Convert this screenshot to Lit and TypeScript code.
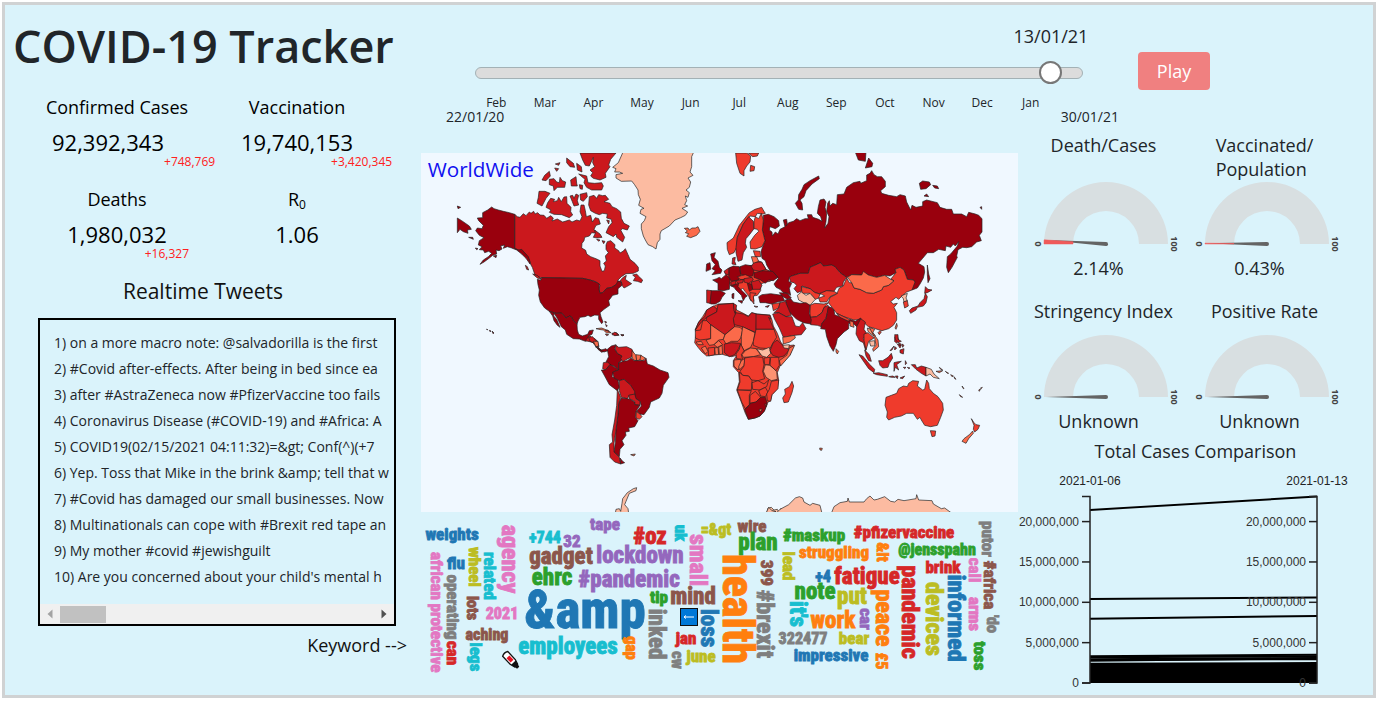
import { LitElement, html, svg, css } from "lit";
import { customElement, property, state } from "lit/decorators.js";
import { classMap } from "lit/directives/class-map.js";

/* ---------- data ---------- */

interface Stat { label: string; sub?: string; value: string; delta?: string; after?: boolean }

const STATS: Stat[] = [
  { label: "Confirmed Cases", value: "92,392,343", delta: "+748,769", after: true },
  { label: "Vaccination", value: "19,740,153", delta: "+3,420,345" },
  { label: "Deaths", value: "1,980,032", delta: "+16,327" },
  { label: "R", sub: "0", value: "1.06" },
];

const TWEETS = [
  "on a more macro note: @salvadorilla is the first",
  "#Covid after-effects. After being in bed since ea",
  "after #AstraZeneca now #PfizerVaccine too fails",
  "Coronavirus Disease (#COVID-19) and #Africa: A",
  "COVID19(02/15/2021 04:11:32)=&gt; Conf(^)(+7",
  "Yep. Toss that Mike in the brink &amp; tell that w",
  "#Covid has damaged our small businesses. Now",
  "Multinationals can cope with #Brexit red tape an",
  "My mother #covid #jewishguilt",
  "Are you concerned about your child's mental h",
];

const MONTHS = ["Feb", "Mar", "Apr", "May", "Jun", "Jul", "Aug", "Sep", "Oct", "Nov", "Dec", "Jan"];

const DARK = "#99000d", RED = "#cb181d", MID = "#ef3b2c", SOFT = "#fb6a4a", PALE = "#fc9272", NONE = "#fcbba1";

type Shape = [string, string];
interface Region { x: number; y: number; shapes: Shape[] }

/* Each region keeps its outlines relative to its own origin. */
const REGIONS: Region[] = [
  { x: -3, y: -9, shapes: [
    [RED, "284,193 292,200 300,202 310,191 318,197 328,186 333,190 341,184 345,192 353,188 360,195 372,196 380,205 392,197 400,204 396,213 412,207 428,216 448,210 456,216 470,210 480,213 486,200 480,185 483,165 492,165 496,182 499,200 512,196 517,216 526,203 536,206 541,222 528,226 522,238 530,250 515,248 508,258 494,262 492,272 486,280 485,294 497,301 500,312 512,320 530,327 540,332 540,348 546,364 553,362 556,348 551,340 559,333 556,318 565,308 558,298 558,285 562,275 572,272 585,284 584,294 596,302 600,309 610,303 616,296 624,314 630,328 645,340 655,352 655,363 640,370 618,371 604,380 592,392 599,394 608,383 619,376 616,388 624,394 635,401 622,409 612,414 606,406 604,394 590,404 575,412 560,415 548,428 540,430 537,418 540,405 527,395 510,390 488,385 362,383 345,375 337,352 333,345 325,325 312,306 305,305 284,295"],
    [RED, "357,124 375,124 390,130 378,145 366,168 351,160 355,142"],
    [RED, "392,145 404,148 400,155 412,152 416,142 424,155 432,141 440,140 441,160 453,172 452,185 458,195 448,203 425,194 402,193 388,187 393,180 378,172 383,158"],
    [RED, "450,138 458,136 462,145 468,132 476,136 472,152 476,165 462,168 457,155"],
    [RED, "480,133 500,128 502,140 490,154 482,150"],
    [RED, "508,140 522,136 530,145 536,134 548,137 556,136 566,148 552,155 570,160 576,170 590,176 602,186 604,205 612,220 628,228 622,240 608,236 602,240 614,262 608,276 590,262 588,252 580,260 558,248 566,230 576,218 574,208 560,204 562,192 548,190 538,194 526,190 512,182 506,165"],
    [RED, "524,240 540,252 546,262 532,264 520,262 526,250"],
    [RED, "480,9 588,9 572,28 566,45 570,50 556,70 558,82 540,90 520,85 512,78 518,68 510,60 524,50 518,38 520,22 508,48 496,46 488,30"],
    [RED, "476,72 500,78 504,98 524,100 545,98 550,108 545,120 515,120 500,112 492,98 495,88"],
    [RED, "388,88 402,86 410,96 418,98 420,82 427,92 437,96 434,112 412,112 402,122 400,108 388,104"],
    [RED, "366,90 374,76 388,64 391,78 378,92"],
    [RED, "440,24 460,40 464,52 450,50 440,38"],
    [RED, "470,40 484,50 486,66 472,60"],
    [RED, "452,90 468,80 470,100 472,108 454,108"],
    [RED, "404,54 416,56 410,64"], [RED, "406,42 420,38 416,46"], [RED, "478,104 488,106 487,118 480,116"],
    [RED, "638,375 650,372 655,378 668,390 664,398 652,394 640,392 646,382"],
    [RED, "316,346 322,350 326,360 320,358"], [RED, "338,372 352,376 364,388 352,384"],
    [RED, "560,210 568,212 566,222"], [RED, "546,272 555,274 551,281"], [RED, "530,268 540,270 536,274"],
    [DARK, "188,188 203,180 215,171 222,176 235,180 250,184 268,188 284,193 284,295 296,300 305,298 312,306 325,320 330,335 330,342 318,325 305,312 290,300 275,294 262,290 250,295 254,285 242,288 246,297 237,302 228,300 230,312 218,316 207,325 192,336 180,343 190,330 205,320 215,310 206,304 194,308 190,300 178,299 186,290 175,285 178,272 192,263 178,256 167,242 172,234 186,236 190,226 176,212 172,204 188,203"],
    [DARK, "112,204 125,212 148,228 154,238 142,240 144,250 130,245 120,238 112,248"],
    [DARK, "112,168 122,172 114,176"], [DARK, "146,262 158,262 160,268"], [DARK, "166,294 174,296 170,299"],
    [DARK, "220,318 230,316 228,323"], [DARK, "200,537 203,539 201,540"], [DARK, "208,541 213,543 210,545"], [DARK, "216,543 222,549 219,551"],
    [DARK, "352,388 362,391 365,383 488,385 510,390 527,396 538,402 537,418 540,430 548,428 560,415 575,412 588,404 594,393 604,396 606,406 594,416 594,432 578,436 566,452 569,466 552,478 540,488 543,500 549,516 545,521 536,508 536,496 524,495 512,500 504,496 495,500 480,502 474,513 471,523 460,512 454,500 448,498 438,504 425,489 408,490 388,484 374,474 361,456 356,436 358,420 354,404"],
    [DARK, "388,484 408,490 425,489 438,504 448,498 454,500 460,512 471,523 472,540 476,553 487,558 503,553 508,542 520,540 516,553 506,557 506,570 496,574 478,567 460,566 440,553 436,540 424,530 412,505 402,490 401,498 410,508 420,532 412,526 402,512 398,498"],
    [RED, "496,572 508,557 512,558 511,566 525,566 532,574 522,578"], [SOFT, "517,576 532,574 537,590 528,590"],
    [DARK, "532,588 540,598 552,604 545,607 534,598"],
    [SOFT, "528,536 545,534 560,540 573,548 560,549 550,540 536,538"],
    [RED, "575,550 590,548 597,556 584,557"], [RED, "602,554 612,555 606,558"], [RED, "556,552 566,554 560,557"],
    [RED, "554,514 560,516 557,520"], [RED, "557,523 562,528 559,530"],
    [NONE, "610,4 822,4 815,20 815,50 810,66 819,76 804,84 812,96 808,112 798,120 808,128 804,142 796,138 800,152 794,164 803,168 786,175 803,186 796,196 782,203 765,210 748,228 724,242 720,252 720,268 712,278 708,297 698,290 684,284 676,270 670,258 664,236 664,222 673,212 678,200 660,190 663,178 672,175 656,166 661,148 655,134 654,120 643,103 635,93 604,94 588,84 588,74 608,70 598,66 584,66 588,56 578,52 595,38"],
    [SOFT, "793,235 804,234 808,240 816,234 826,234 834,230 840,244 830,256 812,263 800,259 806,251 796,248 802,243"],
  ] },
  { x: 837, y: -9, shapes: [
    [MID, "107,9 140,9 152,18 150,36 140,48 132,62 132,78 120,70 110,40"], [MID, "145,9 176,9 172,18 158,20"], [MID, "152,46 164,50 162,62 150,64"],
    [DARK, "465,4 498,4 496,34 475,30"], [DARK, "506,24 518,40 516,50 496,54"],
    [DARK, "296,178 308,180 306,160 300,150 312,140 318,122 336,102 358,86 356,78 330,92 312,104 306,118 296,134 295,150 286,160"],
    [DARK, "658,100 668,93 688,96 692,104 678,116 662,118"], [DARK, "698,106 712,108 716,116 704,114"], [DARK, "672,138 680,132 686,140"], [DARK, "840,172 845,170 845,178"],
    [DARK, "190,196 205,193 222,200 236,212 238,228 226,236 210,230 208,240 216,246 217,258 226,246 234,252 240,238 255,230 250,210 260,208 262,222 258,228 266,218 280,214 290,206 300,212 315,206 325,206 322,194 335,194 338,202 356,208 366,214 362,200 352,190 355,170 360,150 372,147 378,156 375,172 380,190 378,215 374,234 384,220 387,200 380,184 383,160 388,152 390,168 398,160 410,164 412,134 432,132 440,112 460,98 480,94 482,100 500,92 500,75 510,70 515,62 522,74 532,80 545,80 556,94 556,110 542,122 545,130 566,136 590,140 600,134 616,138 620,156 632,180 636,166 648,172 668,168 668,155 680,150 712,158 720,172 740,178 755,178 760,192 785,192 800,200 806,187 826,192 836,196 846,206 846,246 838,256 844,272 830,276 815,290 800,293 788,292 774,299 770,318 772,322 756,352 745,368 740,352 742,320 752,312 772,288 776,275 766,288 760,282 752,292 738,288 736,302 716,298 700,308 682,308 668,325 655,340 672,350 674,366 670,384 660,402 652,414 636,420 638,408 645,396 640,390 622,388 612,360 600,352 585,358 588,368 570,378 554,376 530,382 505,375 490,368 485,375 455,374 440,382 420,368 405,350 395,345 370,348 362,338 330,352 325,370 300,370 275,378 268,382 266,394 275,400 268,415 272,436 262,430 250,428 240,418 228,412 222,402 235,385 225,372 210,362 200,345 196,332 186,325 183,305 188,290 195,272 187,240 190,210"],
    [DARK, "682,345 686,372 690,386 684,398 682,374"],
    [MID, "192,184 196,190 188,192 172,190 166,200 150,198 130,222 112,262 110,292 102,308 88,314 82,298 81,278 100,264 118,226 140,198 148,188 165,178 185,172"],
    [RED, "146,200 160,214 162,236 150,252 138,266 136,280 140,292 130,308 126,330 114,334 108,308 108,292 112,262 130,222"],
    [MID, "166,200 176,206 184,190 190,210 187,240 195,272 186,290 166,297 152,296 150,276 164,256 176,244 172,238 162,236 162,214"],
    [RED, "268,382 275,378 300,370 325,370 330,352 362,338 370,348 395,345 405,350 420,368 440,382 430,396 428,408 410,412 402,424 380,422 362,432 345,428 330,416 306,408 304,424 292,428 282,416 290,406 282,398 272,396"],
    [MID, "440,384 448,398 455,398 462,414 480,418 500,428 520,430 545,420 550,410 566,406 582,392 572,388 588,368 585,358 600,352 612,360 622,388 640,390 645,396 636,420 620,426 604,440 596,448 588,442 572,455 580,462 592,460 582,472 590,488 590,510 580,526 566,536 546,542 538,540 520,534 505,530 490,516 480,508 462,510 432,500 410,490 398,474 385,458 390,442 410,432 418,414 430,408"],
    [MID, "540,542 544,546 538,554 534,548"],
    [SOFT, "442,382 455,374 485,375 490,364 505,375 530,382 554,376 572,388 582,392 566,406 550,410 545,420 520,430 500,428 480,418 462,414 455,398"],
    [MID, "304,410 330,416 345,428 360,432 356,444 346,448 330,430 306,430"],
    [NONE, "292,436 304,426 318,436 330,430 346,448 330,466 315,460 296,450"],
    [MID, "360,430 380,422 402,424 412,430 390,440 380,456 360,456 356,444 374,438"],
    [MID, "330,466 344,460 372,462 385,458 372,474 366,488 350,500 330,502"],
    [RED, "330,502 350,500 366,488 372,472 384,466 394,478 382,488 378,505 366,520 370,532 352,526 332,524"],
    [DARK, "394,472 402,480 404,494 420,500 446,512 450,508 466,514 482,504 484,512 470,530 462,522 446,520 446,536 432,546 412,566 408,584 400,604 390,588 380,560 376,538 362,536 366,520 378,505 382,488 384,472"],
    [MID, "410,490 448,508 446,514 420,502"], [SOFT, "450,512 460,516 462,532 450,528"],
    [DARK, "256,450 272,446 280,456 300,460 318,458 330,466 328,490 334,510 332,522 310,518 290,508 276,494 264,482 260,466"],
    [DARK, "176,440 186,434 212,431 246,436 254,452 232,456 215,462 196,458 180,458"],
    [DARK, "238,428 262,430 274,444 262,448 246,438"],
    [MID, "216,462 240,458 236,474 220,482"], [RED, "240,458 256,454 266,478 274,496 258,500 236,488 222,488 236,474"],
    [RED, "218,492 236,488 258,500 276,500 286,528 298,530 308,518 318,536 304,554 284,556 250,562 238,534 224,508"],
    [SOFT, "248,562 284,556 286,564 270,576 250,582"],
    [RED, "470,530 482,506 496,516 492,538 500,550 490,566 500,582 497,602 490,578 478,572 468,552"],
    [MID, "492,552 504,548 522,564 506,574 498,600 492,572"],
    [PALE, "502,534 512,538 526,558 518,556 504,544"], [NONE, "508,574 524,572 524,588 512,588"],
    [SOFT, "508,532 524,538 518,548 534,570 536,590 520,604 518,596 528,586 524,564"],
    [NONE, "603,438 622,430 618,444 622,452 612,456 610,446"], [MID, "610,456 622,452 625,468 614,474"],
    [RED, "628,482 636,474 654,468 660,458 672,446 676,430 682,440 678,458 670,468 652,472 648,480 632,490"], [RED, "676,410 684,418 696,420 682,428 674,430"],
    [SOFT, "585,534 590,520 592,528 588,538"],
    [RED, "584,560 592,556 596,570 590,580 584,574"], [RED, "592,582 604,586 600,594"], [RED, "584,590 590,594 584,600"],
  ] },
  { x: 807, y: 231, shapes: [
    [MID, "105,126 120,112 150,112 190,105 195,90 215,96 228,118 250,128 262,140 240,154 228,156 212,162 212,182 202,196 190,198 192,214 182,212 175,196 165,184 158,174 150,182 140,168 122,168"],
    [DARK, "62,182 92,182 106,190 96,202 90,214 76,222 62,222 56,216"], [RED, "50,180 64,182 60,220 50,218"],
    [DARK, "80,146 88,142 94,146 108,134 120,146 118,178 100,182 84,180 84,160 68,150"],
    [DARK, "62,72 76,68 72,82 84,94 88,112 96,120 92,130 66,134 76,122 66,116 76,104 66,92"],
    [DARK, "50,102 60,98 62,118 48,124"],
    [DARK, "118,114 130,108 148,110 152,134 146,150 124,154 116,140"], [DARK, "150,110 166,104 188,108 192,122 188,138 170,140 152,132"],
    [RED, "128,84 136,82 134,94 138,104 126,102"], [RED, "102,124 116,114 116,134 106,132"],
    [RED, "192,96 215,96 228,118 210,124 190,120 184,110"], [MID, "190,62 210,64 212,80 196,80"], [SOFT, "184,80 200,80 206,94 190,100"],
    [DARK, "192,128 220,122 248,124 264,142 250,152 236,150 226,160 212,150 192,142"],
    [MID, "142,140 166,134 184,142 176,150 150,148"], [RED, "122,156 136,152 138,162 124,166"], [RED, "138,152 160,148 158,158 144,160"],
    [RED, "162,146 186,142 190,150 176,160 162,156"], [RED, "184,156 206,150 216,166 210,178 188,178"], [DARK, "172,160 184,162 188,178 178,184"],
    [DARK, "124,168 146,160 144,170 158,184 172,198 166,202 160,212 154,196 138,180 132,172"],
    [DARK, "144,212 158,212 156,220"], [DARK, "126,192 132,190 131,206 126,204"], [MID, "180,188 198,190 190,200 192,222 180,206"], [MID, "192,228 204,230 198,232"], [RED, "226,230 238,226 234,232"],
  ] },
  { x: 357, y: 531, shapes: [
    [MID, "518,-70 535,-78 580,-80 590,-60 610,-50 625,-42 635,-52 650,-48 690,-45 696,-30 700,-12 712,10 722,36 732,48 762,45 750,75 720,108 712,128 716,150 712,176 696,194 692,212 682,218 672,245 660,258 645,264 625,268 616,250 606,222 590,180 598,155 596,128 580,110 580,92 590,76 575,80 565,78 553,75 545,72 500,78 485,65 474,52 464,38 466,24 470,8 465,0 476,-24 488,-40 500,-60"],
    [RED, "520,-72 532,-62 530,-54 500,-38 484,-24 466,0 476,-24 494,-40 500,-60"],
    [RED, "534,-76 580,-80 584,-58 588,-38 582,-28 584,-10 555,14 542,8 512,-16 498,-28 500,-38 530,-54"],
    [RED, "580,-80 590,-74 586,-50 582,-58"],
    [RED, "588,-52 610,-48 625,-40 635,-52 650,-48 648,8 600,-12 583,-16 580,-34"],
    [RED, "648,-48 690,-44 692,-32 686,-38 702,-2 648,-2"],
    [MID, "466,2 482,0 488,-28 500,-28 512,-16 512,26 480,30 466,24"],
    [SOFT, "512,-16 555,14 550,28 536,30 522,44 508,46 498,30 512,26"],
    [SOFT, "555,14 584,-10 600,-8 608,0 602,24 594,34 574,34 558,42 550,28"],
    [SOFT, "608,-10 645,8 640,34 632,52 612,62 604,46 604,20"],
    [MID, "648,-2 702,-2 710,22 698,40 690,56 660,54 640,46 640,34 646,8"],
    [SOFT, "522,44 536,32 548,44 532,52"], [MID, "504,54 524,52 524,74 506,78"], [SOFT, "524,54 534,52 536,74 526,74"], [SOFT, "536,52 546,46 548,72 538,74"],
    [RED, "553,42 575,38 602,40 596,56 584,74 568,80 553,68"],
    [MID, "602,42 612,62 604,74 608,88 590,86 588,72 598,58"],
    [SOFT, "606,74 616,62 632,54 648,56 662,74 640,80 610,82"],
    [NONE, "650,56 668,60 688,52 692,70 680,82 666,78"],
    [SOFT, "582,90 602,88 604,104 594,120 582,108"], [SOFT, "604,92 616,84 612,106 598,120 596,110"],
    [RED, "700,38 712,30 728,46 748,60 732,78 716,82 698,76 690,62"],
    [NONE, "728,46 748,44 746,56 732,54"],
    [SOFT, "748,54 764,46 750,76 722,108 718,92 740,76"],
    [MID, "614,84 640,80 668,82 672,104 668,124 674,146 654,152 634,150 626,138 608,136 600,124 612,108"],
    [PALE, "676,104 690,106 710,124 712,148 694,152 678,142 670,124"],
    [MID, "692,82 716,82 718,106 708,122 690,106"], [MID, "672,84 690,82 688,104 674,104"],
    [MID, "598,126 608,136 626,138 636,152 634,180 592,180 600,156"],
    [MID, "636,158 654,152 672,162 686,150 680,170 660,180 638,178"],
    [MID, "592,180 634,182 628,196 628,224 616,236 606,218"],
    [MID, "630,196 646,184 662,202 648,216 630,220"], [MID, "656,182 676,172 684,186 676,200 662,198"],
    [MID, "694,154 716,150 714,176 696,194 692,214 682,212 680,192 688,178"],
    [DARK, "614,238 628,226 630,220 648,216 662,202 676,202 682,222 674,242 660,258 645,264 625,268"],
    [SOFT, "658,238 666,236 664,244 658,244"], [MID, "674,222 680,222 678,230"],
    [SOFT, "468,36 484,34 490,44 474,44"], [SOFT, "484,54 496,48 504,64 496,72"],
    [RED, "146,22 158,20 168,32 164,40 150,34"], [SOFT, "160,34 174,34 176,48 168,50"],
    [DARK, "166,50 184,60 198,56 204,62 192,66 176,58"],
    [DARK, "202,58 214,48 228,44 224,56 232,70 250,78 244,92 236,98 236,120 222,108 208,104 198,96 206,80"],
    [RED, "228,46 236,52 260,50 276,58 280,68 274,82 256,90 250,96 242,86 246,78 232,70 226,58"],
    [SOFT, "276,62 288,76 290,92 280,90 276,80"], [SOFT, "288,74 304,76 300,90 290,92"], [SOFT, "302,76 316,84 308,92 300,90"],
    [RED, "190,98 204,96 210,104 196,120 188,116"],
    [DARK, "184,120 196,120 210,104 222,110 236,120 220,126 216,140 234,150 238,172 232,182 208,164 194,138"],
    [DARK, "218,126 236,120 236,98 250,94 262,92 274,84 282,92 312,92 318,84 322,102 340,108 360,120 384,128 387,142 370,166 366,190 358,204 332,216 328,232 312,254 300,252 290,244 304,228 300,214 286,206 284,190 272,166 252,148 238,152 222,144"],
    [RED, "238,152 252,148 272,166 284,184 284,194 268,196 262,206 244,202 238,182"],
    [RED, "266,196 284,192 288,206 300,214 300,226 284,224 284,214 268,206"],
    [MID, "288,244 300,252 306,260 298,268 288,264"],
    [DARK, "244,204 262,206 270,208 284,216 284,224 300,226 288,244 286,262 294,272 284,290 266,294 268,304 256,306 258,316 246,332 252,344 240,358 238,380 222,366 226,338 228,300 234,252 236,220"],
    [RED, "232,178 242,202 236,220 234,252 228,300 222,340 222,366 238,382 242,402 224,396 210,382 208,344 218,336 216,314 224,270 230,226"], [DARK, "240,384 248,394 254,398 242,402"],
    [SOFT, "272,374 286,372 282,378"], [RED, "196,2 202,0 208,4"], [RED, "216,14 224,6 236,14 226,16"], [RED, "244,14 252,15 248,17"],
    [NONE, "226,550 228,538 238,536 242,544 246,520 248,506 262,488 280,476 290,473 288,482 268,490 258,514 254,524 264,536 266,550"],
    [NONE, "680,550 684,534 694,532 702,540 712,538 716,545 722,536 740,545"],
  ] },
  { x: 1017, y: 531, shapes: [
    [MID, "96,154 101,168 96,188 85,216 72,218 68,204 76,192 74,178 88,170"],
    [SOFT, "228,56 236,64 232,72 228,66"],
    [RED, "297,74 308,78 330,104 344,118 342,128 326,116 312,96"], [RED, "340,130 356,128 382,134 382,139 350,134"], [RED, "386,140 398,138 406,142 394,142"],
    [RED, "314,60 328,74 334,94 326,92 318,78"], [RED, "356,92 368,92 384,82 394,70 398,84 388,100 384,112 368,114 360,106"], [RED, "402,98 410,96 424,94 410,104 416,120 406,112 402,124"],
    [RED, "406,138 414,138 412,146"], [RED, "420,144 434,138 428,146"], [RED, "430,112 438,112 434,116"], [RED, "442,112 450,114 446,116"], [RED, "436,92 440,100 436,104"],
    [RED, "454,104 466,104 470,114 484,108 498,112 498,138 484,130 468,118"], [NONE, "498,112 514,118 522,132 538,146 520,142 510,132 498,138"], [SOFT, "528,124 548,122 538,128"], [SOFT, "538,112 548,120 542,118"],
    [RED, "404,14 414,14 414,28 424,34 414,38 406,28"], [RED, "416,40 424,42 420,48"], [RED, "426,42 432,46 428,52"], [RED, "420,60 432,56 430,72 420,68"], [RED, "390,62 402,48 396,60"],
    [SOFT, "556,124 566,130 562,130"], [SOFT, "572,134 580,138 576,140"], [SOFT, "582,140 588,148 584,146"], [SOFT, "606,168 612,176 610,176"], [SOFT, "598,194 608,202 602,200"], [SOFT, "656,180 662,176 658,184"], [SOFT, "662,174 667,172 664,176"],
    [MID, "500,150 506,160 508,176 520,190 534,200 548,220 550,240 542,262 532,286 512,290 494,286 484,270 480,262 472,268 460,250 440,250 424,258 404,262 386,270 380,262 382,246 375,226 378,202 394,196 410,190 416,176 430,168 442,170 446,160 458,152 476,154 472,168 488,180 494,178"],
    [MID, "511,302 527,303 525,318 516,320"],
    [MID, "634,266 642,278 648,284 659,286 654,298 644,306 640,298 642,286"], [SOFT, "638,303 640,310 626,326 618,340 606,334 612,326 628,314"],
    [SOFT, "179,354 187,355 185,361 180,360"],
    [NONE, "48,550 60,538 86,524 106,504 118,500 128,504 132,516 150,526 158,520 180,526 186,550"], [NONE, "18,550 26,532 34,540 48,545"],
    [NONE, "214,550 222,530 240,518 262,514 264,504 268,516 312,516 320,506 330,498 342,510 352,508 374,500 392,514 404,516 414,508 432,512 468,506 470,494 476,510 516,512 520,522 544,536 554,534 576,550"],
  ] },
];

type Word = [text: string, x: number, y: number, size: number, color: string, upright?: boolean];

const BLUE = "#1f77b4", ORANGE = "#ff7f0e", GREEN = "#2ca02c", CRIMSON = "#d62728", PURPLE = "#9467bd",
  BROWN = "#8c564b", PINK = "#e377c2", GRAY = "#7f7f7f", OLIVE = "#bcbd22", CYAN = "#17becf";

/* The last flag marks words that run from top to bottom. */
const WORDS: Word[] = [
  ["weights", 31, 20, 17, BLUE], ["agency", 89, 44, 24, PINK, true], ["tape", 184, 10, 17, PURPLE], ["+744", 124, 23, 16, CYAN],
  ["32", 151, 27, 17, PURPLE], ["#oz", 229, 22, 23, CRIMSON], ["uk", 259, 18, 17, CYAN, true], ["small", 277, 45, 24, PINK, true],
  ["lockdown", 219, 41, 23, PURPLE], ["gadget", 140, 42, 23, BROWN], ["ehrc", 131, 63, 23, GREEN], ["#pandemic", 208, 65, 23, PURPLE],
  ["&amp", 164, 96, 53, BLUE], ["tip", 238, 83, 17, GREEN], ["mind", 272, 82, 23, BROWN], ["wheel", 53, 52, 17, OLIVE, true],
  ["flu", 35, 49, 17, BLUE], ["related", 68, 61, 17, CYAN, true], ["african", 15, 61, 17, PINK, true], ["protective", 15, 123, 17, PINK, true],
  ["operating", 31, 92, 17, GRAY, true], ["can", 31, 138, 17, CRIMSON, true], ["lots", 51, 93, 16, BROWN, true], ["legs", 54, 142, 17, CYAN, true],
  ["2021", 81, 99, 16, PINK], ["aching", 66, 120, 16, BROWN], ["employees", 147, 132, 23, CYAN], ["gap", 210, 133, 16, ORANGE, true],
  ["inked", 235, 119, 23, GRAY, true], ["loss", 287, 113, 23, BLUE, true], ["jan", 265, 124, 17, CRIMSON], ["june", 280, 142, 17, OLIVE],
  ["cw", 256, 145, 16, GRAY, true], ["=&gt", 295, 15, 16, OLIVE], ["wire", 331, 12, 17, BROWN], ["plan", 337, 28, 23, GREEN],
  ["#maskup", 393, 21, 17, GREEN], ["#pfizervaccine", 483, 18, 17, CRIMSON], ["struggling", 413, 38, 17, ORANGE], ["&lt", 461, 37, 17, ORANGE, true],
  ["@jensspahn", 516, 35, 16, GREEN], ["brink", 522, 53, 17, CRIMSON], ["lead", 367, 51, 17, OLIVE, true], ["399", 345, 58, 17, BROWN, true],
  ["#brexit", 344, 109, 24, GRAY, true], ["health", 316, 94, 44, ORANGE, true], ["+4", 402, 62, 16, BLUE], ["fatigue", 446, 62, 23, CRIMSON],
  ["note", 394, 77, 23, GREEN], ["put", 431, 82, 23, OLIVE], ["it's", 376, 99, 23, CYAN, true], ["work", 412, 106, 23, ORANGE],
  ["car", 444, 104, 17, PURPLE, true], ["322477", 382, 124, 16, GRAY], ["bear", 433, 124, 17, OLIVE], ["impressive", 410, 141, 17, BLUE],
  ["£5", 460, 146, 16, ORANGE, true], ["peace", 463, 103, 24, ORANGE, true], ["pandemic", 489, 97, 24, CRIMSON, true], ["devices", 513, 104, 24, OLIVE, true],
  ["informed", 535, 103, 24, BLUE, true], ["call", 553, 55, 17, PINK, true], ["arms", 553, 99, 17, PINK, true], ["#africa", 568, 70, 17, BROWN, true],
  ["'do", 571, 109, 16, GRAY, true], ["putor", 566, 24, 17, GRAY, true], ["toss", 558, 141, 17, GREEN, true],
];

/* ---------- gauge ---------- */

@customElement("ratio-gauge")
class RatioGauge extends LitElement {
  @property() heading = "";
  @property({ type: Number }) value = 0;
  @property() reading = "";

  static styles = css`
    :host { display: flex; flex-direction: column; align-items: center; }
    .heading { margin: 0; padding-left: 10px; flex: 1; font-size: 18px; line-height: 24px; font-weight: 400; white-space: pre-line; }
    .dial { display: block; width: 160px; height: 75px; overflow: visible; }
    .reading { margin: 0; font-size: 18px; line-height: 24px; }
    .tick { font: bold 9px "Open Sans", sans-serif; fill: #444; }
  `;

  private at(r: number, v: number): string {
    const a = Math.PI * (1 - v / 100);
    return `${(r * Math.cos(a)).toFixed(2)} ${(-r * Math.sin(a)).toFixed(2)}`;
  }

  private band(from: number, to: number): string {
    return `M${this.at(62, from)}A62 62 0 0 1 ${this.at(62, to)}L${this.at(33, to)}A33 33 0 0 0 ${this.at(33, from)}Z`;
  }

  render() {
    return html`
      <h3 class="heading">${this.heading}</h3>
      <svg class="dial" viewBox="-87 -63 160 75" role="img" aria-label=${this.heading}>
        <path d=${this.band(0, 100)} fill="#d8dfe1"></path>
        <g transform="rotate(${this.value * 1.8})">
          <path d="M-60 0L0 -2A2 2 0 0 1 0 2Z" fill="#646464"></path>
        </g>
        ${this.value ? svg`<path d=${this.band(0, this.value)} fill="#ef5a5a" stroke="#ef5a5a" stroke-width="0.5"></path>` : null}
        <text class="tick" transform="translate(-65 0) rotate(-90)" text-anchor="middle">0</text>
        <text class="tick" transform="translate(65 0) rotate(90)" text-anchor="middle">100</text>
      </svg>
      <p class="reading">${this.reading}</p>
    `;
  }
}

/* ---------- world map ---------- */

@customElement("world-map")
class WorldMap extends LitElement {
  static styles = css`
    :host { display: block; }
    .map { display: block; width: 100%; background: #f0f8ff; }
    .land { stroke: #222; stroke-width: 2.4; stroke-linejoin: round; stroke-opacity: 0.85; }
    .name { font: 62px "Open Sans", sans-serif; fill: #1010f0; }
  `;

  render() {
    return html`
      <svg class="map" viewBox="0 0 1791 1077" role="img" aria-label="World map of confirmed cases">
        ${REGIONS.map((r) => svg`<g class="land" transform="translate(${r.x} ${r.y})">
          ${r.shapes.map(([fill, points]) => svg`<polygon points=${points} fill=${fill}></polygon>`)}
        </g>`)}
        <text class="name" x="20" y="73">WorldWide</text>
      </svg>
    `;
  }
}

/* ---------- keyword cloud ---------- */

@customElement("keyword-cloud")
class KeywordCloud extends LitElement {
  static styles = css`
    :host { display: block; }
    .cloud { display: block; width: 100%; }
    .word { font-family: "Roboto Condensed", "Open Sans Condensed", Roboto, sans-serif; font-weight: 800; text-anchor: middle; stroke-width: 0.8; }
  `;

  render() {
    return html`
      <svg class="cloud" viewBox="0 0 597 165" role="img" aria-label="Keywords">
        ${WORDS.map(([text, x, y, size, color, down]) => svg`
          <text class="word" font-size=${size} fill=${color} stroke=${color}
            transform="translate(${x} ${y}) rotate(${down ? 90 : 0})" y=${Math.round(size * 0.32)}>${text}</text>`)}
        <g transform="translate(259 93)">
          <rect x="0.5" y="0.5" width="17" height="17" fill="#0078d7" stroke="#111"></rect>
          <path d="M4 9H14M4 9L6 7.500M4 9L6 10.500" stroke="#fff" fill="none"></path>
        </g>
        <g transform="translate(89 144) rotate(47)">
          <path d="M-7 -3.500H4L9 -2V2L4 3.500H-7Q-9 0 -7 -3.500Z" fill="#fff" stroke="#111" stroke-width="1.300"></path>
          <rect x="-3" y="-2" width="6" height="4" fill="#e81123"></rect>
          <path d="M5 -3L12 -1.500V1.500L5 3Z" fill="#111"></path>
        </g>
      </svg>
    `;
  }
}

/* ---------- comparison chart ---------- */

@customElement("case-slopes")
class CaseSlopes extends LitElement {
  static styles = css`
    :host { display: block; }
    .chart { display: block; width: 100%; }
    .text { font: 12px "Liberation Sans", Arial, sans-serif; fill: #333; text-anchor: end; }
    .date { font: 12px "Liberation Sans", Arial, sans-serif; fill: #222; text-anchor: middle; }
    .axis { stroke: #222; stroke-width: 1.5; fill: none; }
    .slope { stroke: #000; stroke-width: 2; }
  `;

  render() {
    const y = (cases: number) => 214 - cases * 8.07;
    const slopes = [[21.45, 23.1], [10.4, 10.6], [7.95, 8.3], [3.3, 3.5], [3.2, 3.3], [2.95, 3.1], [2.75, 3.05], [2.85, 2.95]];
    const band = [y(2.5), y(2.6)];
    return html`
      <svg class="chart" viewBox="0 0 355 226" role="img" aria-label="Total Cases Comparison">
        <text class="date" x="72" y="16">2021-01-06</text>
        <text class="date" x="299" y="16">2021-01-13</text>
        <polygon points="72,${band[0]} 299,${band[1]} 299,${y(0)} 72,${y(0)}"></polygon>
        ${slopes.map(([a, b]) => svg`<line class="slope" x1="72" x2="299" y1=${y(a)} y2=${y(b)}></line>`)}
        ${[72, 299].map((x) => svg`
          <path class="axis" d="M${x - 8} ${y(23.1)}H${x}V${y(0)}H${x - 8}"></path>
          ${[0, 5, 10, 15, 20].map((v) => svg`
            <line class="axis" x1=${x - 8} x2=${x} y1=${y(v)} y2=${y(v)}></line>
            <text class="text" x=${x - 11} y=${y(v) + 4}>${v ? `${v},000,000` : "0"}</text>`)}`)}
      </svg>
    `;
  }
}

/* ---------- page ---------- */

@customElement("app-root")
class AppRoot extends LitElement {
  @state() private day = 357;
  private readonly lastDay = 370;

  static styles = css`
    :host { display: block; padding: 2px 3px 4px 2px; background: #fff; color: #212529; font-family: "Open Sans", sans-serif; }
    * { box-sizing: border-box; }
    .frame { display: grid; grid-template-columns: 416fr 952fr; border: 3px solid #d0d2d3; background: #daf3fb; }
    .side { padding: 9px 14px 0 8px; min-width: 0; }
    .title { margin: 0 0 14px; font-size: 45px; line-height: 64px; font-weight: 600; white-space: nowrap; }
    .stats { display: grid; grid-template-columns: 1fr 1fr; row-gap: 16px; padding: 0 20px 0 14px; color: #000; }
    .stat { display: flex; flex-direction: column; align-items: center; height: 76px; }
    .label { margin: 0; font-size: 18px; line-height: 30px; font-weight: 400; }
    .sub { font-size: 12px; vertical-align: -3px; line-height: 0; }
    .figure { display: grid; padding-top: 5px; }
    .wide { padding-right: 18px; }
    .value { font-size: 22px; line-height: 30px; }
    .delta { width: 0; margin: -3px 0 0 calc(100% - 22px); font-size: 12px; line-height: 16px; color: #ff2020; white-space: nowrap; }
    .after { margin-left: 100%; }
    .subtitle { margin: 13px 14px 9px 0; font-size: 21px; line-height: 36px; font-weight: 400; text-align: center; color: #111; }
    .tweets { margin: 0 11px 0 25px; border: 2px solid #000; }
    .list { list-style: none; margin: 0; padding: 10px 0 14px 14px; }
    .tweet { font-size: 14px; line-height: 26px; white-space: nowrap; }
    .scroller { display: flex; align-items: center; height: 20px; padding: 0 7px; background: #f0f0f0; }
    .thumb { width: 46px; height: 17px; margin-left: 7px; background: #c1c1c1; }
    .arrow { width: 6px; height: 10px; }
    .next { margin-left: auto; }
    .keyword { margin: 6px 0 0; font-size: 18px; line-height: 26px; text-align: right; color: #111; }
    .board { display: flex; flex-direction: column; min-width: 0; }
    .top { display: flex; height: 128px; padding: 0 163px 0 25px; gap: 19px; }
    .timeline { flex: 1; padding-top: 19px; }
    .scale { position: relative; margin: 0 36px 0 29px; padding-top: 37px; }
    .today { position: absolute; top: 0; transform: translateX(-50%); font-size: 18px; line-height: 24px; }
    .range { display: block; width: 100%; height: 24px; margin: 0; appearance: none; background: none; }
    .range::-webkit-slider-runnable-track { height: 12px; border: 1px solid #a3b1b5; border-radius: 6px; background: #dcdcdc; }
    .range::-webkit-slider-thumb { appearance: none; width: 23px; height: 23px; margin-top: -7px; border: 2px solid #777; border-radius: 50%; background: #fff; }
    .months { display: grid; grid-template-columns: repeat(12, 1fr); margin: 10px 64px 0 26px; font-size: 12px; line-height: 16px; text-align: center; }
    .ends { display: flex; justify-content: space-between; margin-top: -2px; font-size: 14px; line-height: 16px; }
    .play { align-self: flex-start; margin-top: 47px; width: 72px; height: 38px; border: 0; border-radius: 4px; background: #f08080; color: #fff; font: 18px "Open Sans", sans-serif; }
    .bottom { display: grid; grid-template-columns: 597fr 355fr; }
    .world { padding-top: 20px; min-width: 0; }
    .cloud { display: block; margin-top: 3px; }
    .gauges { display: grid; grid-template-columns: 161px 161px; grid-template-rows: 147px 134px; row-gap: 19px; margin-bottom: 6px; }
    .compare { margin: 0 0 6px; font-size: 18px; line-height: 24px; font-weight: 400; text-align: center; }
  `;

  private get today(): string {
    return new Date(Date.UTC(2020, 0, 22 + this.day)).toLocaleDateString("en-GB", {
      day: "2-digit", month: "2-digit", year: "2-digit", timeZone: "UTC",
    });
  }

  render() {
    const pos = (this.day / this.lastDay) * 100;
    return html`
      <main class="frame">
        <section class="side">
          <h1 class="title">COVID-19 Tracker</h1>
          <div class="stats">
            ${STATS.map((s) => html`
              <div class="stat">
                <h2 class="label">${s.label}${s.sub ? html`<span class="sub">${s.sub}</span>` : null}</h2>
                <div class=${classMap({ figure: true, wide: !!s.after })}>
                  <span class="value">${s.value}</span>
                  ${s.delta ? html`<span class=${classMap({ delta: true, after: !!s.after })}>${s.delta}</span>` : null}
                </div>
              </div>`)}
          </div>
          <h2 class="subtitle">Realtime Tweets</h2>
          <div class="tweets">
            <ol class="list">${TWEETS.map((t, i) => html`<li class="tweet">${i + 1}) ${t}</li>`)}</ol>
            <div class="scroller">
              <svg class="arrow" viewBox="0 0 6 10"><path d="M5.500 0.500V9.500L0.500 5Z" fill="#a3a3a3"></path></svg>
              <span class="thumb"></span>
              <svg class="arrow next" viewBox="0 0 6 10"><path d="M0.500 0.500V9.500L5.500 5Z" fill="#505050"></path></svg>
            </div>
          </div>
          <p class="keyword">Keyword --&gt;</p>
        </section>
        <section class="board">
          <div class="top">
            <div class="timeline">
              <div class="scale">
                <output class="today" style="left:calc(${pos}% + ${11.5 - pos * 0.23}px)">${this.today}</output>
                <input class="range" type="range" aria-label="Date" min="0" max=${this.lastDay} .value=${String(this.day)}
                  @input=${(e: Event) => { this.day = Number((e.target as HTMLInputElement).value); }}>
              </div>
              <div class="months">${MONTHS.map((m) => html`<span>${m}</span>`)}</div>
              <div class="ends"><span>22/01/20</span><span>30/01/21</span></div>
            </div>
            <button class="play" type="button">Play</button>
          </div>
          <div class="bottom">
            <div class="world">
              <world-map></world-map>
              <keyword-cloud class="cloud"></keyword-cloud>
            </div>
            <div>
              <div class="gauges">
                <ratio-gauge heading="Death/Cases" value="2.14" reading="2.14%"></ratio-gauge>
                <ratio-gauge heading=${"Vaccinated/\nPopulation"} value="0.43" reading="0.43%"></ratio-gauge>
                <ratio-gauge heading="Stringency Index" value="0" reading="Unknown"></ratio-gauge>
                <ratio-gauge heading="Positive Rate" value="0" reading="Unknown"></ratio-gauge>
              </div>
              <h2 class="compare">Total Cases Comparison</h2>
              <case-slopes></case-slopes>
            </div>
          </div>
        </section>
      </main>
    `;
  }
}
